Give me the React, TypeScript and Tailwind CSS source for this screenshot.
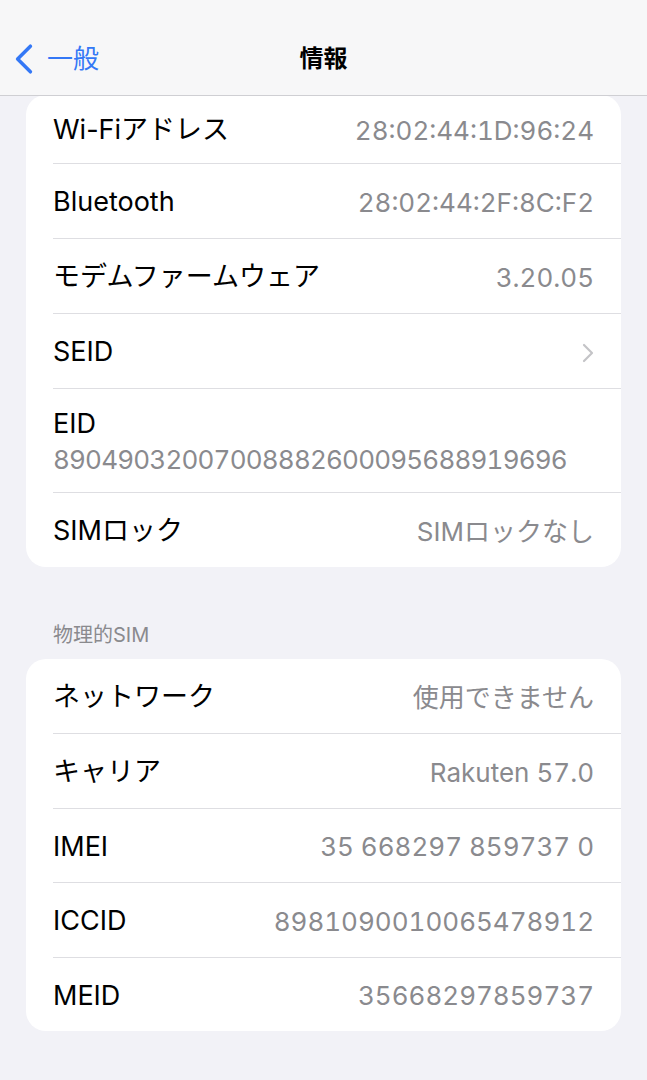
import React from 'react';

interface Row {
  label: string;
  value?: string;
  chevron?: boolean;
  stacked?: boolean;
}

const firstCard: Row[] = [
  { label: 'Wi-Fiアドレス', value: '28:02:44:1D:96:24' },
  { label: 'Bluetooth', value: '28:02:44:2F:8C:F2' },
  { label: 'モデムファームウェア', value: '3.20.05' },
  { label: 'SEID', chevron: true },
  { label: 'EID', value: '89049032007008882600095688919696', stacked: true },
  { label: 'SIMロック', value: 'SIMロックなし' },
];

const simCard: Row[] = [
  { label: 'ネットワーク', value: '使用できません' },
  { label: 'キャリア', value: 'Rakuten 57.0' },
  { label: 'IMEI', value: '35 668297 859737 0' },
  { label: 'ICCID', value: '8981090010065478912' },
  { label: 'MEID', value: '35668297859737' },
];

const font = { fontFamily: 'Inter, "Noto Sans CJK JP", sans-serif' };

const Chevron = ({ className, back }: { className: string; back?: boolean }) => (
  <svg viewBox="0 0 12 20" className={className} fill="none">
    <path d={back ? 'M10 2 L2 10 L10 18' : 'M2 2 L10 10 L2 18'} strokeLinecap="round" strokeLinejoin="round" />
  </svg>
);

const InfoRow = ({ row, first, height }: { row: Row; first: boolean; height: string }) => (
  <div className="pl-[27px]">
    <div className={`pr-[27px] ${first ? '' : 'border-t border-[#dedee2]'}`}>
      {row.stacked ? (
        <div className="h-[103px] pt-[3px] flex flex-col justify-center gap-[4px]">
          <span className="text-[27px] leading-[32px] text-black">{row.label}</span>
          <span className="text-[26px] leading-[32px] text-[#8a8a8e] tabular-nums tracking-[-0.8px]">{row.value}</span>
        </div>
      ) : (
        <div className={`${height} pt-[3px] flex items-center justify-between`}>
          <span className="text-[27px] text-black">{row.label}</span>
          {row.chevron ? (
            <Chevron className="w-[12px] h-[20px] stroke-[#c4c4c7] stroke-[2.2]" />
          ) : (
            <span className="text-[26px] text-[#8a8a8e] tabular-nums">{row.value}</span>
          )}
        </div>
      )}
    </div>
  </div>
);

export default function App() {
  return (
    <div className="w-[647px] h-[1080px] bg-[#f2f2f7] overflow-hidden" style={font}>
      <div className="h-[96px] bg-[#f7f7f8] border-b border-[#cfcfd3] relative flex items-end pb-[20px]">
        <div className="flex items-center pl-[14px] gap-[13px]">
          <Chevron back className="w-[20px] h-[32px] stroke-[#3478f6] stroke-[2.2]" />
          <span className="text-[26px] text-[#3478f6] leading-none">一般</span>
        </div>
        <div className="absolute left-0 right-0 bottom-[24px] text-center text-[24px] font-bold text-black leading-none">
          情報
        </div>
      </div>

      <div className="px-[26px]">
        <div className="bg-white rounded-[20px] -mt-[1px]">
          {firstCard.map((row, i) => (
            <InfoRow key={row.label} row={row} first={i === 0} height={i === 0 ? 'h-[68px]' : 'h-[74px]'} />
          ))}
        </div>

        <div className="pt-[56px] pb-[12px] pl-[27px] text-[20px] leading-[24px] text-[#8a8a8e]">物理的SIM</div>

        <div className="bg-white rounded-[20px]">
          {simCard.map((row, i) => (
            <InfoRow key={row.label} row={row} first={i === 0} height={i === 0 ? 'h-[74px]' : 'h-[73.5px]'} />
          ))}
        </div>
      </div>
    </div>
  );
}
